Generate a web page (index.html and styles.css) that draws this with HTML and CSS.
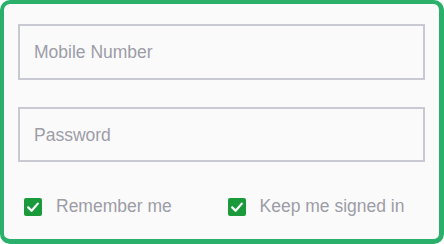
FILE: index.html
```html
<!DOCTYPE html>
<html>
<head>
<meta charset="utf-8">
<link rel="stylesheet" href="styles.css">
</head>
<body>
<div class="frame">
  <div class="field"><span class="ph">Mobile Number</span></div>
  <div class="field field-2"><span class="ph">Password</span></div>
  <div class="checks">
    <label class="check">
      <span class="box"><svg viewBox="0 0 18 18" width="18" height="18"><path d="M4.2 9.4 L7.6 12.8 L13.8 5.6" fill="none" stroke="#fff" stroke-width="2.2" stroke-linecap="round" stroke-linejoin="round"/></svg></span>
      <span class="lbl">Remember me</span>
    </label>
    <label class="check">
      <span class="box"><svg viewBox="0 0 18 18" width="18" height="18"><path d="M4.2 9.4 L7.6 12.8 L13.8 5.6" fill="none" stroke="#fff" stroke-width="2.2" stroke-linecap="round" stroke-linejoin="round"/></svg></span>
      <span class="lbl">Keep me signed in</span>
    </label>
  </div>
</div>
</body>
</html>
```
FILE: styles.css
```css
html, body { margin: 0; padding: 0; background: #ffffff; }
.frame {
  box-sizing: border-box;
  width: 444px;
  height: 244px;
  border: 4px solid #2bb06c;
  border-right-width: 5px;
  border-bottom-width: 5px;
  border-radius: 10px;
  background: #fafafa;
  padding: 20px 14px 0 14px;
  font-family: "Liberation Sans", Arial, sans-serif;
}
.field {
  box-sizing: border-box;
  height: 56px;
  border: 2px solid #c9c9d1;
  display: flex;
  align-items: center;
  padding-left: 14px;
  padding-top: 1px;
}
.field-2 { margin-top: 27px; height: 55px; }
.ph { color: #9d9da7; font-size: 17.5px; }
.checks {
  margin-top: 34px;
  display: grid;
  grid-template-columns: 1fr 1fr;
}
.check {
  display: flex;
  align-items: center;
  padding-left: 6px;
}
.box {
  width: 18px; height: 18px;
  background: #1b9a3c;
  border-radius: 2px;
  display: block;
}
.box svg { display: block; }
.lbl { margin-left: 14px; color: #9d9da7; font-size: 17.5px; }
```
